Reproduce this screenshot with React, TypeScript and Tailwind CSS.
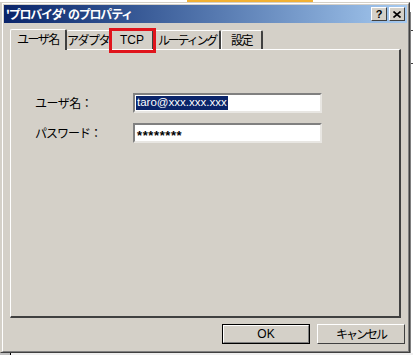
export default function App() {
  const tabBase =
    "flex items-center justify-center whitespace-nowrap h-[19px] bg-[#d4d0c8] border-t border-l border-t-white border-l-white border-r-2 border-r-[#404040] rounded-tl-[2px] rounded-tr-[2px] text-black text-[12px] tracking-[-1.5px]";
  return (
    <div className="w-[413px] h-[355px] bg-white overflow-hidden flex flex-col font-['Noto_Sans_CJK_JP',sans-serif] text-[12px] leading-none">
      {/* strip of window behind */}
      <div className="h-[2px] flex shrink-0">
        <div className="w-[187px]" />
        <div className="w-[126px] bg-[#f2b134]" />
      </div>
      <div className="flex flex-1">
        {/* dialog */}
        <div className="w-[410px] h-[351px] shrink-0 bg-[#d4d0c8] border border-t-[#d4d0c8] border-l-[#d4d0c8] border-r-[#404040] border-b-[#404040] pl-px flex">
          <div className="flex-1 flex flex-col border border-t-white border-l-white border-r-[#808080] border-b-[#808080]">
            {/* title bar */}
            <div className="h-[18px] mx-px mt-px flex items-center bg-gradient-to-r from-[#0a246a] to-[#a6caf0]">
              <span className="pl-[2px] text-white font-bold text-[12px] tracking-[-1.2px] whitespace-pre">'プロバイダ'  のプロパティ</span>
              <div className="ml-auto flex gap-[2px] pr-[2px]">
                <div className="w-[16px] h-[14px] bg-[#d4d0c8] border border-t-white border-l-white border-r-[#404040] border-b-[#404040] flex items-center justify-center font-['Liberation_Sans',sans-serif] font-bold text-[11px] text-black">
                  ?
                </div>
                <div className="w-[16px] h-[14px] bg-[#d4d0c8] border border-t-white border-l-white border-r-[#404040] border-b-[#404040] flex items-center justify-center">
                  <svg width="8" height="7" viewBox="0 0 8 7">
                    <path d="M0.5 0.5 L7.5 6.5 M7.5 0.5 L0.5 6.5" stroke="#000" strokeWidth="1.6" />
                  </svg>
                </div>
              </div>
            </div>
            {/* tabs */}
            <div className="mt-[5px] pl-[7px] flex items-end h-[21px] relative z-10">
              <div className="w-[57px] h-[21px] flex items-center justify-center whitespace-nowrap bg-[#d4d0c8] border-t border-l border-t-white border-l-white border-r-2 border-r-[#404040] rounded-tl-[2px] rounded-tr-[2px] text-black text-[12px] tracking-[-1.5px] -mb-px pb-[2px]">
                ユーザ名
              </div>
              <div className={tabBase + " w-[44px] border-l-0"}>アダプタ</div>
              <div className={tabBase + " w-[43px] font-['Liberation_Sans',sans-serif] tracking-normal"}>TCP</div>
              <div className={tabBase + " w-[67px] tracking-[-2.2px]"}>ルーティング</div>
              <div className={tabBase + " w-[42px]"}>設定</div>
              <div className="absolute left-[106px] top-0 w-[47px] h-[25px] border-[3px] border-[#e0141c]" />
            </div>
            {/* panel */}
            <div className="ml-[7px] w-[391px] h-[269px] border-t border-l border-t-white border-l-white border-r-2 border-b-2 border-r-[#404040] border-b-[#404040] flex flex-col pt-[43px] pl-[24px]">
              <div className="flex items-center h-[20px]">
                <span className="w-[98px] text-[12px] tracking-[-0.5px] text-black whitespace-nowrap">ユーザ名：</span>
                <div className="w-[189px] h-[20px] bg-white border-2 border-t-[#808080] border-l-[#808080] border-b-[#e8e6e2] border-r-[#e8e6e2] flex items-center pl-px">
                  <span className="bg-[#0a246a] text-white font-['Liberation_Sans',sans-serif] text-[11.5px] h-[14px] flex items-center px-px whitespace-nowrap">
                    taro@xxx.xxx.xxx
                  </span>
                </div>
              </div>
              <div className="flex items-center h-[20px] mt-[10px]">
                <span className="w-[98px] text-[12px] tracking-[-1px] text-black whitespace-nowrap">パスワード：</span>
                <div className="w-[189px] h-[20px] bg-white border-2 border-t-[#808080] border-l-[#808080] border-b-[#e8e6e2] border-r-[#e8e6e2] flex items-center pl-[2px]">
                  <span className="font-['Liberation_Sans',sans-serif] text-[13px] font-bold text-black tracking-[0.6px] pt-[4px]">********</span>
                </div>
              </div>
            </div>
            {/* buttons */}
            <div className="flex justify-end gap-[7px] mt-[6px] pr-[3px]">
              <div className="w-[88px] h-[20px] border border-black flex">
                <div className="flex-1 flex items-center justify-center bg-[#d4d0c8] border border-t-white border-l-white border-r-[#808080] border-b-[#808080] text-black text-[12px] font-['Liberation_Sans',sans-serif]">
                  OK
                </div>
              </div>
              <div className="w-[88px] h-[20px] flex items-center justify-center whitespace-nowrap bg-[#d4d0c8] border border-t-white border-l-white border-r-[#404040] border-b-[#404040] text-black text-[12px] tracking-[-2px]">
                キャンセル
              </div>
            </div>
          </div>
        </div>
        {/* right strip */}
        <div className="flex-1 flex flex-col">
          <div className="h-[10px]" />
          <div className="flex-1 border-l border-l-[#808080] flex flex-col">
            <div className="h-[18px]" />
            <div className="h-px bg-[#404040]" />
            <div className="h-[32px]" />
            <div className="h-px bg-[#404040]" />
          </div>
        </div>
      </div>
      <div className="h-[2px] flex shrink-0">
        <div className="w-[10px] bg-[#c0c0c0]" />
        <div className="w-px bg-black" />
        <div className="flex-1 bg-[#f0f0f0]" />
      </div>
    </div>
  );
}
